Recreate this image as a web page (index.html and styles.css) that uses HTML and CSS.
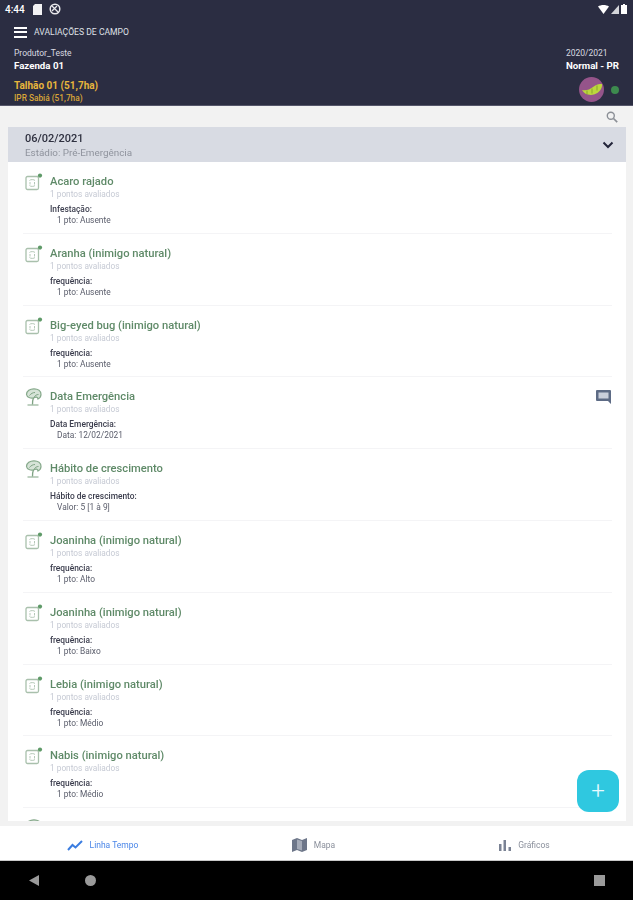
FILE: index.html
```html
<!DOCTYPE html>
<html lang="pt-BR">
<head>
  <meta charset="UTF-8" />
  <meta name="viewport" content="width=device-width, initial-scale=1" />
  <title>Avaliações de campo</title>
  <link rel="stylesheet" href="styles.css">
</head>
<body>
  <svg class="defs" width="0" height="0" aria-hidden="true">
    <symbol id="pest" viewBox="0 0 18 18">
      <rect x="1" y="3.500" width="12.500" height="13" rx="1.500" fill="none" stroke="#a9c0ac" stroke-width="1.300"/>
      <path d="M4.500 7.500c.8-1.200 4.700-1.200 5.500 0M4.500 12.500c.8 1.200 4.700 1.200 5.500 0M5 9v2.500M9.500 9v2.500" fill="none" stroke="#b4c8b7" stroke-width="1"/>
      <circle cx="15" cy="2.600" r="2.100" fill="#5f9a68"/>
    </symbol>
    <symbol id="plant" viewBox="0 0 18 18">
      <path d="M2.500 17h11" stroke="#9cb8a0" stroke-width="1.300"/>
      <path d="M7.500 16.500c0-3 .3-5 1-7" fill="none" stroke="#7fa384" stroke-width="1.300"/>
      <path d="M8.500 10C5.500 10.500 2 9.500 1.500 6.500 1.500 3 5 .8 9 .8s7 2.200 7 5.700c0 3-2 4-3 4.500-.3-2-2-2.500-4.500-1Z" fill="#d6e3d7" stroke="#86a98b" stroke-width="1.200"/>
      <path d="M4.500 7.500C6 5.500 8 4.500 10 4.500M9 9.500c1-2 2.500-3 4.500-3" fill="none" stroke="#7fa384" stroke-width="1"/>
    </symbol>
  </svg>

  <div class="screen">
    <header class="topbar">
      <div class="status">
        <div class="status-left">
          <span class="clock">4:44</span>
          <svg width="9" height="11" viewBox="0 0 9 11"><path d="M2 0h7v11H0V2Z" fill="#f2f2f4"/></svg>
          <svg width="12" height="12" viewBox="0 0 12 12"><circle cx="6" cy="6" r="4.800" fill="none" stroke="#e8e8ec" stroke-width="1.500"/><path d="M2.500 2.500l7 7M3 8l5-5" stroke="#e8e8ec" stroke-width="1.300"/></svg>
        </div>
        <div class="status-right">
          <svg width="11" height="9" viewBox="0 0 11 9"><path d="M0 1.500C3 -.5 8 -.5 11 1.500L5.500 9Z" fill="#fff"/></svg>
          <svg width="8" height="9" viewBox="0 0 8 9"><path d="M8 0v9H0Z" fill="#d4d5da"/></svg>
          <svg width="6" height="10" viewBox="0 0 6 10"><path d="M2 0h2v1h2v9H0V1h2Z" fill="#fff"/></svg>
        </div>
      </div>

      <div class="appbar">
        <span class="burger"><i></i><i></i><i></i></span>
        <span class="appbar-title">AVALIAÇÕES DE CAMPO</span>
      </div>

      <div class="farm-row">
        <div>
          <div class="farm-small">Produtor_Teste</div>
          <div class="farm-name">Fazenda 01</div>
        </div>
        <div>
          <div class="farm-small">2020/2021</div>
          <div class="farm-name">Normal - PR</div>
        </div>
      </div>

      <div class="plot-row">
        <div class="plot-text">
          <div class="plot-name">Talhão 01 (51,7ha)</div>
          <div class="plot-sub">IPR Sabiá (51,7ha)</div>
        </div>
        <div class="crop">
          <svg width="25" height="25" viewBox="0 0 25 25">
            <circle cx="12.500" cy="12.500" r="12.500" fill="#95548a"/>
            <path d="M3 13c4 1 8-.5 11-3s6-3 9-3c.5 5-3 9-8 10.500-5 1.300-10-.5-12-4.500Z" fill="#bcd63c"/>
            <path d="M8 13.500v4M13 11.500v5M18 8.500v5" stroke="#8aa52c" stroke-width="1"/>
          </svg>
          <span class="online"></span>
        </div>
      </div>
    </header>

    <main class="content">
      <div class="search-row">
        <svg width="12" height="12" viewBox="0 0 12 12"><circle cx="4.800" cy="4.800" r="3.500" fill="none" stroke="#8b8f96" stroke-width="1.400"/><path d="M7.500 7.500l3.700 3.700" stroke="#8b8f96" stroke-width="1.700"/></svg>
      </div>

      <section class="panel">
        <div class="panel-head">
          <div>
            <div class="panel-date">06/02/2021</div>
            <div class="panel-stage">Estádio: Pré-Emergência</div>
          </div>
          <svg width="12" height="8" viewBox="0 0 12 8"><path d="M1.500 1.500L6 6l4.500-4.500" fill="none" stroke="#23253a" stroke-width="2"/></svg>
        </div>

        <ul class="list">
          <li class="item">
            <svg class="item-icon"><use href="#pest"/></svg>
            <div class="item-body">
              <div class="item-title">Acaro rajado</div>
              <div class="item-count">1 pontos avaliados</div>
              <div class="item-label">Infestação:</div>
              <div class="item-value">1 pto: Ausente</div>
            </div>
          </li>
          <li class="item">
            <svg class="item-icon"><use href="#pest"/></svg>
            <div class="item-body">
              <div class="item-title">Aranha (inimigo natural)</div>
              <div class="item-count">1 pontos avaliados</div>
              <div class="item-label">frequência:</div>
              <div class="item-value">1 pto: Ausente</div>
            </div>
          </li>
          <li class="item">
            <svg class="item-icon"><use href="#pest"/></svg>
            <div class="item-body">
              <div class="item-title">Big-eyed bug (inimigo natural)</div>
              <div class="item-count">1 pontos avaliados</div>
              <div class="item-label">frequência:</div>
              <div class="item-value">1 pto: Ausente</div>
            </div>
          </li>
          <li class="item">
            <svg class="item-icon"><use href="#plant"/></svg>
            <div class="item-body">
              <div class="item-title">Data Emergência</div>
              <div class="item-count">1 pontos avaliados</div>
              <div class="item-label">Data Emergência:</div>
              <div class="item-value">Data: 12/02/2021</div>
            </div>
            <svg class="item-note" width="15" height="14" viewBox="0 0 15 14"><path d="M1 0h13a1 1 0 0 1 1 1v13l-3-3H1a1 1 0 0 1-1-1V1a1 1 0 0 1 1-1Z" fill="#5d6b85"/><rect x="2.500" y="2.500" width="10" height="6" fill="#c9cfdb"/></svg>
          </li>
          <li class="item">
            <svg class="item-icon"><use href="#plant"/></svg>
            <div class="item-body">
              <div class="item-title">Hábito de crescimento</div>
              <div class="item-count">1 pontos avaliados</div>
              <div class="item-label">Hábito de crescimento:</div>
              <div class="item-value">Valor: 5 [1 à 9]</div>
            </div>
          </li>
          <li class="item">
            <svg class="item-icon"><use href="#pest"/></svg>
            <div class="item-body">
              <div class="item-title">Joaninha (inimigo natural)</div>
              <div class="item-count">1 pontos avaliados</div>
              <div class="item-label">frequência:</div>
              <div class="item-value">1 pto: Alto</div>
            </div>
          </li>
          <li class="item">
            <svg class="item-icon"><use href="#pest"/></svg>
            <div class="item-body">
              <div class="item-title">Joaninha (inimigo natural)</div>
              <div class="item-count">1 pontos avaliados</div>
              <div class="item-label">frequência:</div>
              <div class="item-value">1 pto: Baixo</div>
            </div>
          </li>
          <li class="item">
            <svg class="item-icon"><use href="#pest"/></svg>
            <div class="item-body">
              <div class="item-title">Lebia (inimigo natural)</div>
              <div class="item-count">1 pontos avaliados</div>
              <div class="item-label">frequência:</div>
              <div class="item-value">1 pto: Médio</div>
            </div>
          </li>
          <li class="item">
            <svg class="item-icon"><use href="#pest"/></svg>
            <div class="item-body">
              <div class="item-title">Nabis (inimigo natural)</div>
              <div class="item-count">1 pontos avaliados</div>
              <div class="item-label">frequência:</div>
              <div class="item-value">1 pto: Médio</div>
            </div>
          </li>
          <li class="item">
            <svg class="item-icon"><use href="#plant"/></svg>
          </li>
        </ul>
      </section>

      <button class="fab">+</button>
    </main>

    <nav class="tabs">
      <div class="tab tab-active">
        <svg width="16" height="11" viewBox="0 0 16 11"><path d="M1 10l4.500-5 3 2.500L15 1" fill="none" stroke="#3b7de0" stroke-width="2"/></svg>
        <span>Linha Tempo</span>
      </div>
      <div class="tab">
        <svg width="15" height="14" viewBox="0 0 15 14"><path d="M0 2l5-2 5 2 5-2v12l-5 2-5-2-5 2Z" fill="#6d7689"/><path d="M5 1.500l5 1.500v9.500l-5-1.500Z" fill="#a5abb8"/></svg>
        <span>Mapa</span>
      </div>
      <div class="tab">
        <svg width="12" height="11" viewBox="0 0 12 11"><path d="M0 4h2.500v7H0ZM4.500 0H7v11H4.500ZM9.500 7H12v4H9.500Z" fill="#7a8294"/></svg>
        <span>Gráficos</span>
      </div>
    </nav>

    <div class="sysnav">
      <span class="nav-back"></span>
      <span class="nav-home"></span>
      <span class="nav-recent"></span>
    </div>
  </div>
</body>
</html>
```

FILE: styles.css
```css
* {
  box-sizing: border-box;
}

html, body {
  margin: 0;
  height: 100%;
  overflow: hidden;
  background-color: #f2f2f2;
  font-family: Roboto, "Liberation Sans", sans-serif;
}

.defs {
  display: block;
  height: 0;
}

.screen {
  position: relative;
  display: flex;
  flex-direction: column;
  height: 900px;
  filter: blur(0.55px);
}

/* top bar */
.topbar {
  flex: none;
  height: 106px;
  background-color: #2b2d42;
  border-bottom: 1px solid #55566a;
  color: #fff;
  padding: 0 14px;
}

.status {
  display: flex;
  justify-content: space-between;
  align-items: center;
  height: 18px;
  margin: 0 -8px 0 -9px;
}

.status-left, .status-right {
  display: flex;
  align-items: center;
  gap: 7px;
}

.status-right {
  gap: 2px;
}

.clock {
  font-size: 10px;
  font-weight: 500;
  margin-right: 1px;
}

.appbar {
  display: flex;
  align-items: center;
  gap: 7px;
  height: 28px;
}

.burger {
  display: flex;
  flex-direction: column;
  justify-content: space-between;
  width: 13px;
  height: 11px;
}

.burger i {
  display: block;
  height: 2px;
  background-color: #fff;
}

.appbar-title {
  font-size: 8.600px;
  color: #dfe0e6;
}

.farm-row {
  display: flex;
  justify-content: space-between;
  margin-top: 1px;
}

.farm-small {
  font-size: 8.500px;
  line-height: 12px;
  color: #d9dae0;
}

.farm-name {
  font-size: 9.700px;
  font-weight: 700;
  line-height: 13px;
}

.plot-row {
  display: flex;
  justify-content: space-between;
  align-items: flex-start;
  margin-top: 1px;
}

.plot-text {
  padding-top: 6px;
}

.plot-name {
  font-size: 10px;
  font-weight: 700;
  line-height: 14px;
  color: #e8b63c;
}

.plot-sub {
  font-size: 8.300px;
  font-weight: 500;
  line-height: 11px;
  color: #d9a637;
}

.crop {
  display: flex;
  align-items: center;
  gap: 7px;
  margin-top: 4px;
}

.online {
  width: 8px;
  height: 8px;
  border-radius: 50%;
  background-color: #3d8a4e;
}

/* content */
.content {
  position: relative;
  flex: 1;
  min-height: 0;
  overflow: hidden;
  padding: 0 7px 5px 8px;
}

.search-row {
  display: flex;
  justify-content: flex-end;
  align-items: center;
  height: 21px;
  padding-right: 8px;
}

.panel {
  height: 694px;
  overflow: hidden;
  background-color: #fff;
}

.panel-head {
  display: flex;
  justify-content: space-between;
  align-items: center;
  height: 35px;
  padding: 0 12px 0 17px;
  background-color: #d8dbe3;
}

.panel-date {
  font-size: 11px;
  font-weight: 500;
  line-height: 15px;
  color: #2f3140;
}

.panel-stage {
  font-size: 9.900px;
  line-height: 13px;
  color: #8f939d;
}

.list {
  list-style: none;
  margin: 0;
  padding: 0 14px 0 15px;
}

.item {
  display: flex;
  height: 71.800px;
  padding-top: 12px;
  border-bottom: 1px solid #f4f4f6;
}

.item-icon {
  flex: none;
  width: 18px;
  height: 18px;
  margin: -1px 7px 0 2px;
}

.item-body {
  flex: 1;
}

.item-title {
  font-size: 11.200px;
  font-weight: 500;
  line-height: 15px;
  color: #5f8a68;
}

.item-count {
  font-size: 8.300px;
  line-height: 11px;
  color: #c6cad4;
}

.item-label {
  margin-top: 3px;
  font-size: 8.400px;
  font-weight: 500;
  line-height: 12px;
  color: #3a3c4c;
}

.item-value {
  padding-left: 7px;
  font-size: 8.400px;
  line-height: 11px;
  color: #5a5d6b;
}

.item-note {
  flex: none;
  margin-top: 1px;
  margin-right: 1px;
}

.fab {
  position: absolute;
  right: 14px;
  bottom: 14px;
  width: 42px;
  height: 42px;
  padding: 0;
  border: 0;
  border-radius: 12px;
  background-color: #2fc8e0;
  color: #e8fbff;
  font-family: Roboto, sans-serif;
  font-size: 24px;
  font-weight: 300;
  line-height: 42px;
}

/* bottom tabs */
.tabs {
  flex: none;
  display: grid;
  grid-template-columns: repeat(3, 1fr);
  height: 35px;
  padding-top: 4px;
  background-color: #fff;
  border-bottom: 1px solid #c9c9c9;
}

.tab {
  display: flex;
  justify-content: center;
  align-items: center;
  gap: 7px;
  padding-right: 6px;
  font-size: 8.500px;
  color: #8b909c;
}

.tab-active {
  color: #4a86e8;
}

.sysnav {
  flex: none;
  position: relative;
  height: 39px;
  background-color: #000;
}

.nav-back, .nav-home, .nav-recent {
  position: absolute;
  top: 14px;
  background-color: #9a9a9a;
}

.nav-back {
  left: 29px;
  width: 10px;
  height: 11px;
  clip-path: polygon(100% 0, 100% 100%, 0 50%);
}

.nav-home {
  left: 85px;
  width: 11px;
  height: 11px;
  border-radius: 50%;
}

.nav-recent {
  left: 594px;
  width: 11px;
  height: 11px;
}
```
